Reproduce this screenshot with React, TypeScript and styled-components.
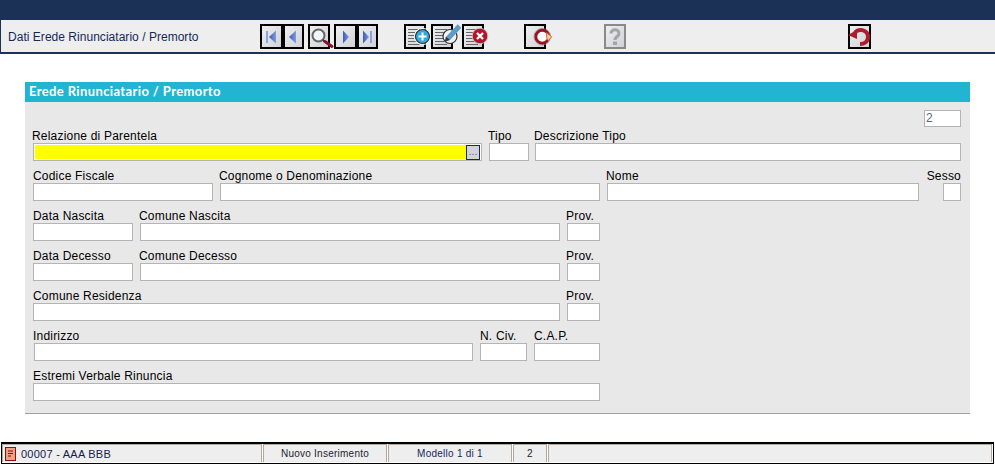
import React from "react";
import styled, { createGlobalStyle } from "styled-components";

const Global = createGlobalStyle`
  html, body { margin: 0; padding: 0; background: #fff; }
  body { font-family: "Liberation Sans", Arial, sans-serif; overflow: hidden; }
  #root { width: 995px; height: 467px; }
`;
const Page = styled.div`
  width: 995px;
  height: 467px;
  display: flex;
  flex-direction: column;
`;
const TopBar = styled.div`
  height: 20px;
  background: #1b3155;
`;
const Toolbar = styled.div`
  height: 28px;
  padding-top: 4px;
  display: flex;
  align-items: flex-start;
  background: #eeeeee;
  border-left: 1px solid #1b3155;
  border-bottom: 2px solid #1b3155;
  box-sizing: content-box;
`;
const ToolTitle = styled.div`
  width: 259px;
  padding-left: 7px;
  box-sizing: border-box;
  font-size: 12px;
  line-height: 26px;
  color: #14285a;
  white-space: nowrap;
  letter-spacing: 0.03px;
`;
const IconSlot = styled.div<{ $gap?: number; $w: number }>`
  width: ${(p) => p.$w}px;
  height: 25px;
  margin-left: ${(p) => p.$gap ?? 0}px;
  flex: none;
  svg { display: block; overflow: visible; }
`;
const Panel = styled.section`
  margin: 28px 25px 0;
  width: 945px;
  display: flex;
  flex-direction: column;
`;
const PanelHead = styled.h2`
  margin: 0;
  height: 20px;
  line-height: 19px;
  padding-left: 4px;
  background: #21b5d1;
  color: #fff;
  font-size: 13px;
  font-weight: 700;
  font-family: "Lato", "Liberation Sans", sans-serif;
  letter-spacing: 0.38px;
`;
const PanelBody = styled.div`
  height: 311px;
  background: #e8e8e8;
  border-bottom: 1px solid #a0a0a0;
  box-sizing: content-box;
  position: relative;
  padding-left: 8px;
  display: flex;
  flex-direction: column;
`;
const Row = styled.div<{ $mt?: number }>`
  display: flex;
  align-items: flex-end;
  margin-top: ${(p) => p.$mt ?? 8}px;
  height: 32px;
`;
const Field = styled.div<{ $w: number; $gap?: number }>`
  width: ${(p) => p.$w}px;
  margin-left: ${(p) => p.$gap ?? 0}px;
  flex: none;
  display: flex;
  flex-direction: column;
`;
const Label = styled.label<{ $right?: boolean; $flush?: boolean }>`
  display: block;
  height: 14px;
  line-height: 15px;
  font-size: 12px;
  color: #000;
  white-space: nowrap;
  letter-spacing: 0.2px;
  margin-left: ${(p) => (p.$right ? "-30px" : p.$flush ? "0" : "-1px")};
  text-align: ${(p) => (p.$right ? "right" : "left")};
`;
const Input = styled.div`
  height: 18px;
  background: #fff;
  border: 1px solid #b4b4b4;
  box-sizing: border-box;
`;
const NumberBox = styled.div`
  position: absolute;
  left: 899px;
  top: 8px;
  width: 37px;
  height: 17px;
  background: #fff;
  border: 1px solid #b4b4b4;
  box-sizing: border-box;
  font-size: 12px;
  line-height: 15px;
  padding-left: 1px;
  color: #667;
`;
const Lookup = styled.div`
  height: 18px;
  background: #fff;
  border: 1px solid #b4b4b4;
  box-sizing: border-box;
  padding: 1px 1px 0;
  display: flex;
  align-items: flex-start;
`;
const Yellow = styled.div`
  flex: 1;
  height: 14px;
  background: #ffff00;
`;
const Dots = styled.div`
  width: 14px;
  height: 15px;
  background: #d4d4d4;
  border: 1px solid #14285a;
  box-sizing: border-box;
  font-size: 11px;
  line-height: 11px;
  color: #666;
  text-align: center;
`;
const Status = styled.footer`
  margin: 28px 1px 0 1px;
  height: 22px;
  border-top: 2px solid #000;
  border-bottom: 1px solid #000;
  border-left: 1px solid #000;
  border-right: 1px solid #000;
  padding-bottom: 1px;
  box-sizing: border-box;
  background: #fff;
  display: flex;
`;
const Cell = styled.div<{ $w: number; $c?: string; $center?: boolean }>`
  width: ${(p) => p.$w}px;
  flex: none;
  margin-right: 1px;
  background: #eeeeee;
  border: 1px solid #b0a99c;
  border-bottom: none;
  box-sizing: border-box;
  font-size: 10px;
  color: ${(p) => p.$c ?? "#222"};
  display: flex;
  align-items: center;
  justify-content: ${(p) => (p.$center ? "center" : "flex-start")};
  gap: 5px;
  padding-left: ${(p) => (p.$center ? 0 : 2)}px;
  letter-spacing: 0.25px;
  white-space: nowrap;
`;
const LastCell = styled(Cell)`
  flex: 1;
  margin-right: 1px;
`;
const CodeText = styled.span`
  font-size: 11px;
  letter-spacing: 0.25px;
  color: #14204a;
`;

const Defs = () => (
  <svg width="0" height="0" style={{ position: "absolute" }}>
    <defs>
      <linearGradient id="btn" x1="0" y1="0" x2="1" y2="1">
        <stop offset="0" stopColor="#f0f0f0" />
        <stop offset="1" stopColor="#cdd0d6" />
      </linearGradient>
      <linearGradient id="arrow" x1="0" y1="0" x2="1" y2="0">
        <stop offset="0" stopColor="#3c5cb4" />
        <stop offset="1" stopColor="#7f9be0" />
      </linearGradient>
    </defs>
  </svg>
);

const Frame = ({ w, children, stroke = "#000" }: { w: number; children?: React.ReactNode; stroke?: string }) => (
  <svg width={w} height={25} viewBox={`0 0 ${w} 25`}>
    <rect x="1" y="1" width={w - 2} height="23" fill="url(#btn)" stroke={stroke} strokeWidth="2" />
    {children}
  </svg>
);
const Nav = ({ kind }: { kind: "first" | "prev" | "next" | "last" }) => (
  <Frame w={kind === "first" || kind === "next" ? 23 : 21}>
    {kind === "first" && (<>
      <rect x="6" y="7" width="2" height="12" fill="#8aa5e0" />
      <path d="M16 6.500v13l-7-6.500z" fill="url(#arrow)" />
    </>)}
    {kind === "prev" && <path d="M13 6.500v13l-7-6.500z" fill="url(#arrow)" />}
    {kind === "next" && <path d="M9 6.500v13l6-6.500z" fill="url(#arrow)" />}
    {kind === "last" && (<>
      <path d="M6 6.500v13l6-6.500z" fill="url(#arrow)" />
      <rect x="13" y="7" width="2" height="12" fill="#8aa5e0" />
    </>)}
  </Frame>
);
const Search = () => (
  <Frame w={22}>
    <circle cx="10.500" cy="11.500" r="6" fill="#f2f4f7" stroke="#666" strokeWidth="2" />
    <path d="M15 16l2 2" stroke="#333" strokeWidth="2" />
    <path d="M17 17.500l7 5" stroke="#8c1030" strokeWidth="3" strokeLinecap="round" />
  </Frame>
);
const Lines = () => (
  <path d="M4 5.500h12M4 8.500h12M4 11.500h9M4 14.500h9M4 17.500h9M4 20.500h12" stroke="#666" strokeWidth="1" />
);
const Add = () => (
  <Frame w={22}>
    <Lines />
    <circle cx="18.500" cy="12.500" r="7" fill="#35a8e0" stroke="#333" strokeWidth="1.200" />
    <circle cx="18.500" cy="12.500" r="8.200" fill="none" stroke="#f4f4f4" strokeWidth="1" />
    <path d="M18.500 8.500v8M14.500 12.500h8" stroke="#fff" strokeWidth="2" />
  </Frame>
);
const Edit = () => (
  <Frame w={22}>
    <Lines />
    <circle cx="19" cy="12.500" r="7" fill="#f2f2f2" stroke="#333" strokeWidth="1.200" />
    <path d="M17 14.500L28.500 2" stroke="#5d9bc9" strokeWidth="5" />
    <path d="M13.500 18l1.500-5.500 4 3.500z" fill="#2b3a4a" />
  </Frame>
);
const Del = () => (
  <Frame w={22}>
    <Lines />
    <circle cx="18" cy="12" r="7.800" fill="#b3152a" stroke="#cfcfcf" strokeWidth=".8" />
    <path d="M15 9l6 6M21 9l-6 6" stroke="#fff" strokeWidth="2.400" />
  </Frame>
);
const Print = () => (
  <Frame w={22}>
    <circle cx="18.300" cy="12.700" r="6.500" fill="#fff" stroke="#9e1020" strokeWidth="3" />
    <circle cx="18.300" cy="12.700" r="8.300" fill="none" stroke="#7a7a7a" strokeWidth=".6" />
    <path d="M22.700 8.700l5 4-3.400 4-1.600-3z" fill="#f3d2a8" stroke="#d2662a" strokeWidth="1" />
  </Frame>
);
const Help = () => (
  <Frame w={22} stroke="#8a8a8a">
    <path d="M7 9.500c0-5 8-5 8 0 0 3-4 3-4 6.500" fill="none" stroke="#a5a5a5" strokeWidth="3" />
    <rect x="9" y="17.500" width="4" height="3.500" fill="#a5a5a5" />
  </Frame>
);
const Back = () => (
  <Frame w={23}>
    <path d="M7 9c2-5 13-4 13 4 0 5-4 7-8 7" fill="none" stroke="#b01c2c" strokeWidth="4" />
    <path d="M0 11l9-5v9z" fill="#b01c2c" />
  </Frame>
);
const Note = () => (
  <svg width={11} height={14} viewBox="0 0 11 14" style={{ flex: "none" }}>
    <rect x=".5" y=".5" width="10" height="13" fill="#f0a183" stroke="#8a0f12" />
    <path d="M3 4h5M3 6.500h5M3 9h3" stroke="#7a1010" />
  </svg>
);

const F = ({ label, w, gap, right, flush }: { label?: string; w: number; gap?: number; right?: boolean; flush?: boolean }) => (
  <Field $w={w} $gap={gap}>
    <Label $right={right} $flush={flush}>{label}</Label>
    <Input />
  </Field>
);

export default function App() {
  return (
    <Page>
      <Global />
      <Defs />
      <TopBar />
      <Toolbar>
        <ToolTitle>Dati Erede Rinunciatario / Premorto</ToolTitle>
        <IconSlot $w={23}><Nav kind="first" /></IconSlot>
        <IconSlot $w={21}><Nav kind="prev" /></IconSlot>
        <IconSlot $w={22} $gap={4}><Search /></IconSlot>
        <IconSlot $w={23} $gap={4}><Nav kind="next" /></IconSlot>
        <IconSlot $w={21}><Nav kind="last" /></IconSlot>
        <IconSlot $w={22} $gap={26}><Add /></IconSlot>
        <IconSlot $w={22} $gap={5}><Edit /></IconSlot>
        <IconSlot $w={22} $gap={9}><Del /></IconSlot>
        <IconSlot $w={22} $gap={40}><Print /></IconSlot>
        <IconSlot $w={22} $gap={58}><Help /></IconSlot>
        <IconSlot $w={23} $gap={222}><Back /></IconSlot>
      </Toolbar>
      <Panel>
        <PanelHead>Erede Rinunciatario / Premorto</PanelHead>
        <PanelBody>
          <NumberBox>2</NumberBox>
          <Row $mt={27}>
            <Field $w={449}>
              <Label>Relazione di Parentela</Label>
              <Lookup><Yellow /><Dots>...</Dots></Lookup>
            </Field>
            <F label="Tipo" w={40} gap={7} />
            <F label="Descrizione Tipo" w={426} gap={6} />
          </Row>
          <Row>
            <F label="Codice Fiscale" w={180} flush />
            <F label="Cognome o Denominazione" w={380} gap={7} />
            <F label="Nome" w={312} gap={7} />
            <F label="Sesso" w={18} gap={24} right />
          </Row>
          <Row>
            <F label="Data Nascita" w={100} flush />
            <F label="Comune Nascita" w={420} gap={7} />
            <F label="Prov." w={33} gap={7} />
          </Row>
          <Row>
            <F label="Data Decesso" w={100} flush />
            <F label="Comune Decesso" w={420} gap={7} />
            <F label="Prov." w={33} gap={7} />
          </Row>
          <Row>
            <F label="Comune Residenza" w={527} flush />
            <F label="Prov." w={33} gap={7} />
          </Row>
          <Row>
            <F label="Indirizzo" w={439} gap={1} />
            <F label="N. Civ." w={47} gap={7} flush />
            <F label="C.A.P." w={66} gap={7} flush />
          </Row>
          <Row>
            <F label="Estremi Verbale Rinuncia" w={567} flush />
          </Row>
        </PanelBody>
      </Panel>
      <Status>
        <Cell $w={260}><Note /><CodeText>00007 - AAA BBB</CodeText></Cell>
        <Cell $w={124} $c="#223" $center>Nuovo Inserimento</Cell>
        <Cell $w={124} $c="#14285a" $center>Modello 1 di 1</Cell>
        <Cell $w={34} $center>2</Cell>
        <LastCell $w={100} />
      </Status>
    </Page>
  );
}
